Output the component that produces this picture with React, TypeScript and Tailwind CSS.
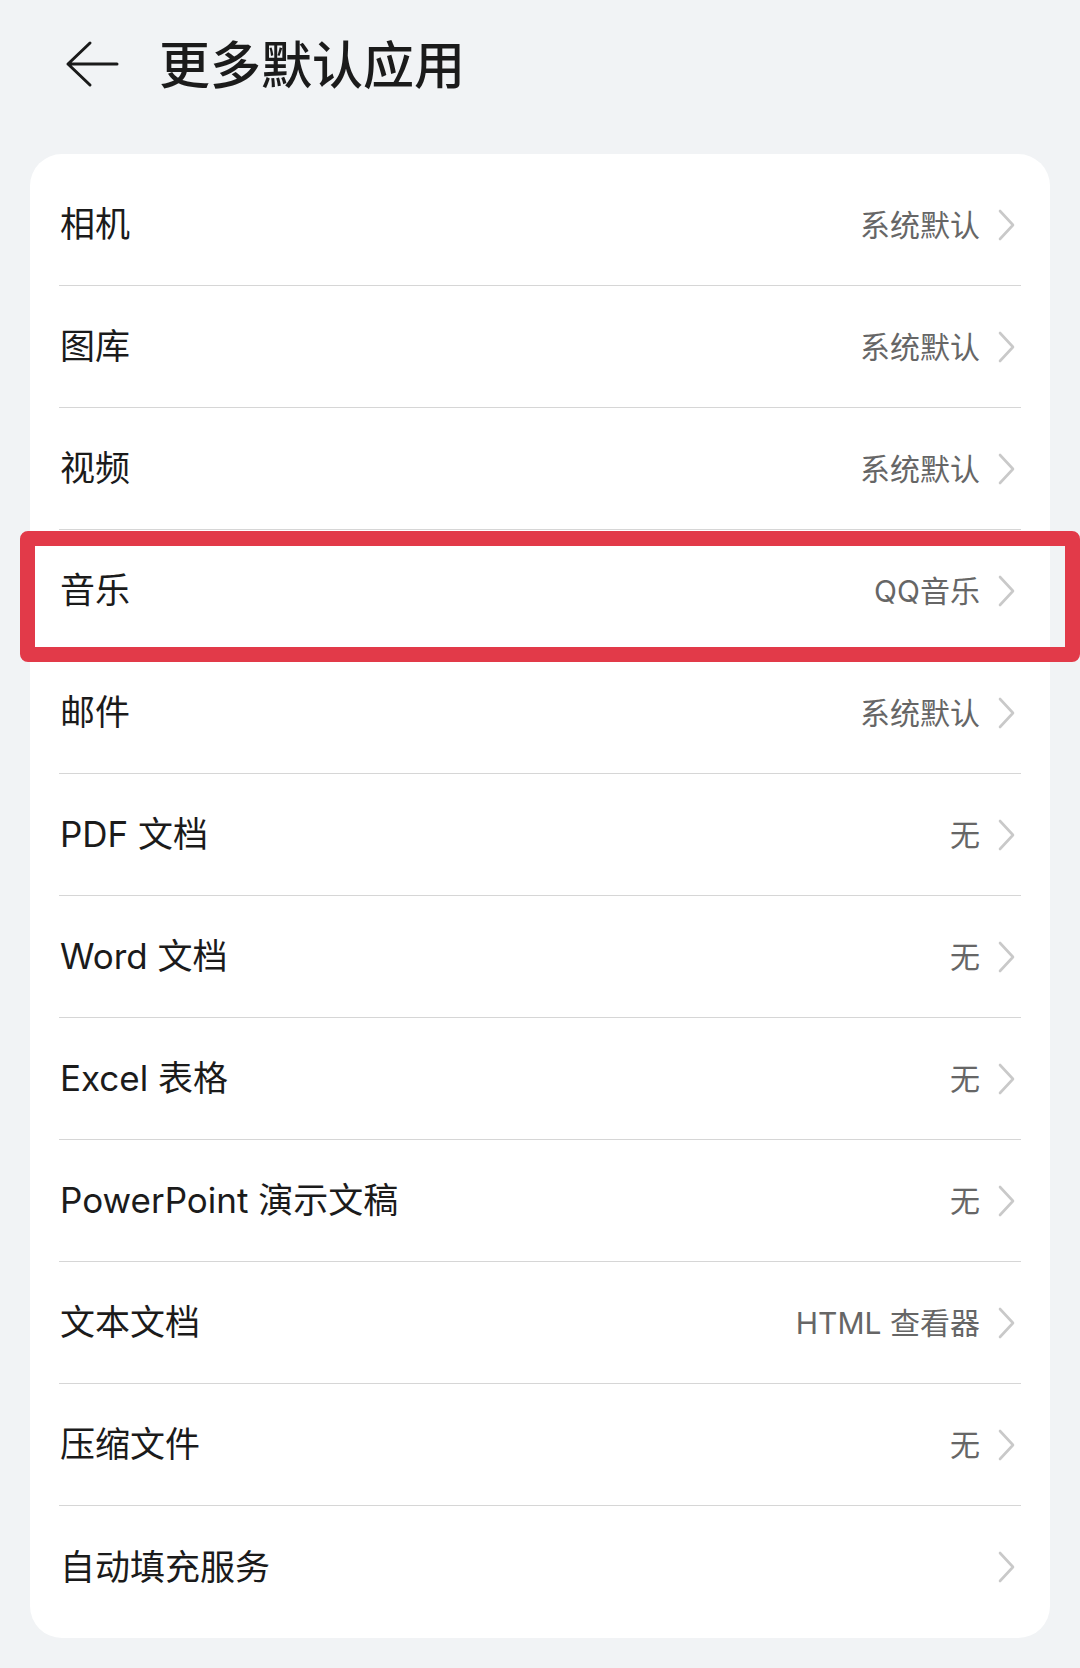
const rows: { label: string; value: string }[] = [
  { label: '相机', value: '系统默认' },
  { label: '图库', value: '系统默认' },
  { label: '视频', value: '系统默认' },
  { label: '音乐', value: 'QQ音乐' },
  { label: '邮件', value: '系统默认' },
  { label: 'PDF 文档', value: '无' },
  { label: 'Word 文档', value: '无' },
  { label: 'Excel 表格', value: '无' },
  { label: 'PowerPoint 演示文稿', value: '无' },
  { label: '文本文档', value: 'HTML 查看器' },
  { label: '压缩文件', value: '无' },
  { label: '自动填充服务', value: '' },
]

function Chevron() {
  return (
    <svg width="17" height="32" viewBox="0 0 17 32" fill="none" className="shrink-0">
      <polyline points="2,2 15,16 2,30" stroke="#c9c9c9" strokeWidth="2.6" strokeLinecap="round" strokeLinejoin="round" />
    </svg>
  )
}

export default function App() {
  return (
    <div
      className="relative min-h-[1668px] w-[1080px] bg-[#f1f3f5] text-[#1b1b1b]"
      style={{ fontFamily: 'Inter, "Noto Sans CJK SC", sans-serif' }}
    >
      {/* header */}
      <div className="flex h-[154px] items-start pl-[65px] pt-[40px]">
        <svg width="54" height="48" viewBox="0 0 54 48" fill="none">
          <path d="M25 3 L3 24 L25 45 M3 24 H52" stroke="#1a1a1a" strokeWidth="3" strokeLinecap="round" strokeLinejoin="round" />
        </svg>
        <h1 className="ml-[40px] -mt-[4px] text-[51px] font-medium leading-[60px]">更多默认应用</h1>
      </div>

      {/* list card */}
      <div className="mx-[30px] rounded-[32px] bg-white px-[29px] py-[10px]">
        {rows.map((r, i) => (
          <div
            key={r.label}
            className={`flex h-[122px] items-center justify-between pl-[1px] pr-[6px] ${
              i < rows.length - 1 ? 'border-b border-[#d6d6d6]' : ''
            }`}
          >
            <span className="text-[35px] leading-none">{r.label}</span>
            <div className="flex items-center gap-[18px]">
              {r.value && <span className="text-[30px] leading-none text-[#666666]">{r.value}</span>}
              <Chevron />
            </div>
          </div>
        ))}
      </div>

      {/* highlight annotation */}
      <div className="absolute left-[20px] top-[531px] h-[131px] w-[1060px] rounded-[8px] border-[15px] border-[#e23a49]" />
    </div>
  )
}
